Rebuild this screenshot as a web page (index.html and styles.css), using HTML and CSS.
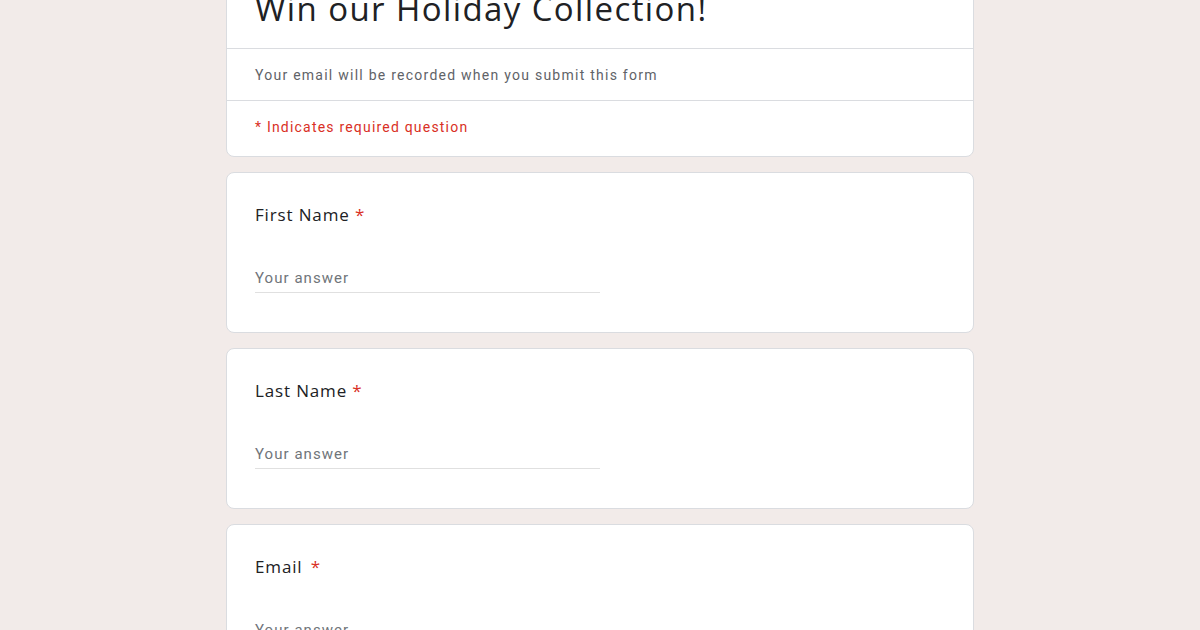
FILE: index.html
```html
<!DOCTYPE html>
<html>
<head>
<meta charset="utf-8">
<link rel="stylesheet" href="styles.css">
</head>
<body>
<div class="form">
  <div class="card header-card">
    <div class="title-row"><h1 class="title">Win our Holiday Collection!</h1></div>
    <div class="info-row">Your email will be recorded when you submit this form</div>
    <div class="req-row">* Indicates required question</div>
  </div>
  <div class="card question">
    <div class="label">First Name <span class="star">*</span></div>
    <div class="answer">Your answer</div>
  </div>
  <div class="card question">
    <div class="label">Last Name <span class="star">*</span></div>
    <div class="answer">Your answer</div>
  </div>
  <div class="card question">
    <div class="label">Email <span class="star star-wide">*</span></div>
    <div class="answer">Your answer</div>
  </div>
</div>
</body>
</html>
```
FILE: styles.css
```css
html, body {
  margin: 0;
  padding: 0;
  background: #f2ebe9;
  height: 630px;
  overflow: hidden;
}
.form {
  width: 748px;
  margin: -41px auto 0;
  display: flex;
  flex-direction: column;
  gap: 15px;
}
.card {
  background: #fff;
  border: 1px solid #dadce0;
  border-radius: 8px;
  box-sizing: border-box;
}
.title-row {
  height: 88px;
  border-bottom: 1px solid #dadce0;
  padding: 0 28px;
  display: flex;
  align-items: flex-end;
}
.title {
  margin: 0 0 19px;
  font-family: "Open Sans", sans-serif;
  font-weight: 400;
  font-size: 33px;
  letter-spacing: 1.4px;
  line-height: 40px;
  color: #202124;
  white-space: nowrap;
}
.info-row {
  height: 51px;
  border-bottom: 1px solid #dadce0;
  padding: 0 28px;
  display: flex;
  align-items: center;
  font-family: Roboto, sans-serif;
  font-size: 14px;
  letter-spacing: 1.25px;
  color: #5f6368;
}
.req-row {
  height: 51px;
  padding: 0 28px 4px;
  display: flex;
  align-items: center;
  font-family: Roboto, sans-serif;
  font-size: 14px;
  letter-spacing: 1.2px;
  color: #d93025;
}
.question {
  height: 161px;
  padding: 28px 28px 0;
}
.label {
  font-family: "Open Sans", sans-serif;
  font-size: 17px;
  letter-spacing: 0.85px;
  line-height: 28px;
  color: #202124;
}
.star {
  color: #d93025;
}
.star-wide {
  margin-left: 3px;
}
.answer {
  margin-top: 35px;
  width: 345px;
  border-bottom: 1px solid #e0e0e0;
  font-family: Roboto, sans-serif;
  font-size: 15px;
  letter-spacing: 1.05px;
  line-height: 28px;
  padding-bottom: 0;
  color: #70757a;
}
```
